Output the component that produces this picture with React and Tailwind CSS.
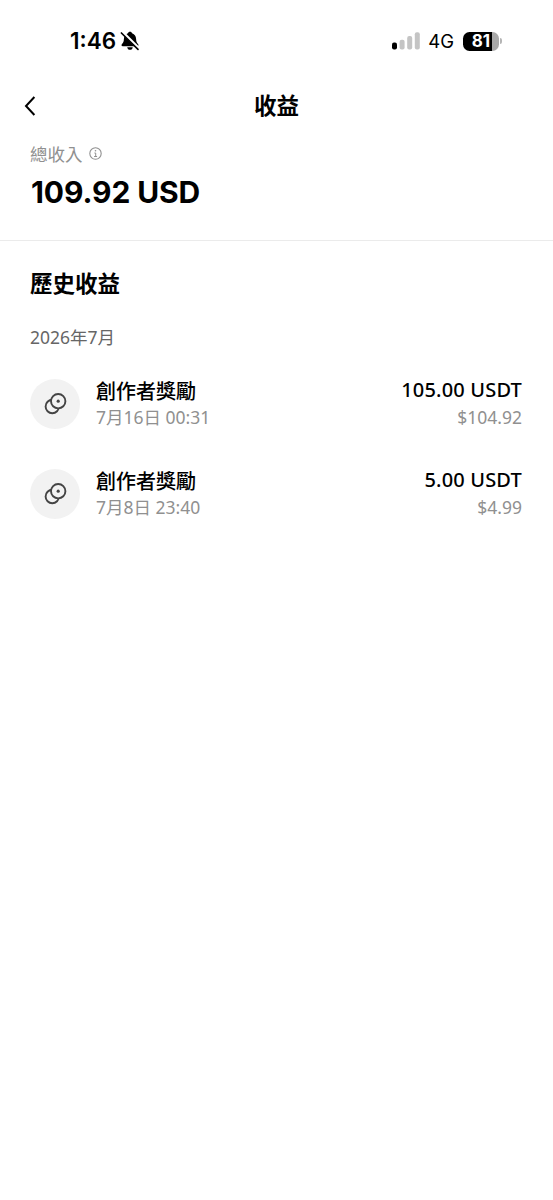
import React from 'react';

const history = [
  { id: 1, title: '創作者獎勵', date: '7月16日 00:31', amount: '105.00 USDT', value: '$104.92' },
  { id: 2, title: '創作者獎勵', date: '7月8日 23:40', amount: '5.00 USDT', value: '$4.99' },
];

const BellOffIcon = () => (
  <svg className="ml-[4px] h-5 w-5" viewBox="0 0 20 20" fill="none">
    <path d="M10 .8c-1.100 0-1.900.7-2.100 1.500C5.300 3.200 4 5.300 3.900 8c-.1 2.800-.6 3.700-1.900 5-.9.900-.6 2.300.8 2.300h14.400c1.400 0 1.700-1.400.8-2.300-1.300-1.300-1.800-2.200-1.900-5-.1-2.700-1.400-4.800-4-5.700C11.900 1.500 11.100.8 10 .8Z" fill="#000" />
    <path d="M7.200 16.200h5.600c-.2 1.600-1.400 2.600-2.800 2.600s-2.600-1-2.800-2.600Z" fill="#000" />
    <path d="M2.600 1.400 19 17.600" stroke="#fff" strokeWidth="3" />
    <path d="M1.400 2 18 18.300" stroke="#000" strokeWidth="1.700" strokeLinecap="round" />
  </svg>
);

const SignalIcon = () => (
  <svg className="h-[18px] w-7" viewBox="0 0 28 18">
    <rect x="0" y="10.500" width="5" height="7" rx="2" fill="#000" />
    <rect x="7.600" y="7.700" width="5" height="9.800" rx="2" fill="#c4c4c4" />
    <rect x="15.200" y="4" width="5" height="13.500" rx="2" fill="#c4c4c4" />
    <rect x="22.800" y="0.300" width="5" height="17.200" rx="2" fill="#c4c4c4" />
  </svg>
);

const Battery = () => (
  <div className="flex items-center">
    <div className="flex h-[19px] w-[36px] items-center justify-center rounded-[6.500px] bg-linear-to-r from-black from-81% to-[#a9a9a9] to-81% text-[17px] leading-none font-bold text-white">
      81
    </div>
    <div className="ml-px h-[6px] w-[2px] rounded-r-full bg-[#b5b5b5]" />
  </div>
);

const CoinsIcon = () => (
  <svg className="h-6 w-6" viewBox="0 0 24 24" fill="#f2f2f2" stroke="#444" strokeWidth="1.900">
    <circle cx="9.300" cy="14.500" r="6.700" />
    <circle cx="15.200" cy="9.200" r="7.200" />
    <circle cx="15.200" cy="9.200" r="1.600" fill="#444" stroke="none" />
  </svg>
);

const InfoIcon = () => (
  <svg className="h-[14px] w-[14px]" viewBox="0 0 14 14" fill="none" stroke="#909090">
    <circle cx="6.500" cy="6.500" r="5.700" strokeWidth="1.100" />
    <path d="M5.400 6h1.300v3.500M5.100 9.500h3" strokeWidth="1" />
    <circle cx="6.500" cy="3.800" r="0.800" fill="#909090" stroke="none" />
  </svg>
);

const StatusBar = () => (
  <div className="flex h-[82px] items-center justify-between pr-[51px] pl-[70px] font-[Inter,sans-serif]">
    <div className="flex items-center">
      <span className="text-[22.500px] leading-none font-semibold">1:46</span>
      <BellOffIcon />
    </div>
    <div className="flex items-center">
      <SignalIcon />
      <span className="mr-[9px] ml-[8px] text-[18.500px] leading-none">4G</span>
      <Battery />
    </div>
  </div>
);

const HistoryRow = ({ item }) => (
  <li className="flex h-[50px] items-center">
    <div className="flex h-[50px] w-[50px] items-center justify-center rounded-full bg-[#f2f2f2]">
      <CoinsIcon />
    </div>
    <div className="ml-4 flex-1">
      <div className="text-[20px] leading-[26px] font-medium">{item.title}</div>
      <div className="text-[17.500px] leading-6 text-[#909090]">{item.date}</div>
    </div>
    <div className="text-right">
      <div className="text-[20px] leading-[26px] font-medium tracking-[0.180px]">{item.amount}</div>
      <div className="text-[17.500px] leading-7 text-[#909090]">{item.value}</div>
    </div>
  </li>
);

export default function App() {
  return (
    <div className="min-h-[1200px] w-full bg-white font-['Noto_Sans','Noto_Sans_CJK_TC',sans-serif] text-black">
      <StatusBar />
      <header className="grid h-[47px] grid-cols-[1fr_auto_1fr] items-center px-[24px]">
        <button className="w-3" aria-label="返回">
          <svg className="h-5 w-3" viewBox="0 0 12 20" fill="none" stroke="#000" strokeWidth="2">
            <path d="M10.400 1 2 10l8.400 9" />
          </svg>
        </button>
        <h1 className="pt-px text-[22.500px] leading-none font-bold">收益</h1>
      </header>
      <section className="h-[112px] border-b border-[#ebebeb] px-[30px] pt-[13px]">
        <div className="flex h-6 items-center gap-[6px] text-[17.500px] text-[#909090]">
          總收入
          <InfoIcon />
        </div>
        <div className="mt-[6px] pl-px font-[Inter,sans-serif] text-[30px] leading-10 font-bold tracking-[-0.100px]">109.92 USD</div>
      </section>
      <section className="pt-[27px] pr-[31px] pl-[30px]">
        <h2 className="text-[22.500px] leading-8 font-bold">歷史收益</h2>
        <div className="mt-[25px] text-[17.500px] leading-6 text-[#666]">2026年7月</div>
        <ul className="mt-[30px] flex flex-col gap-10">
          {history.map((item) => (
            <HistoryRow key={item.id} item={item} />
          ))}
        </ul>
      </section>
    </div>
  );
}
